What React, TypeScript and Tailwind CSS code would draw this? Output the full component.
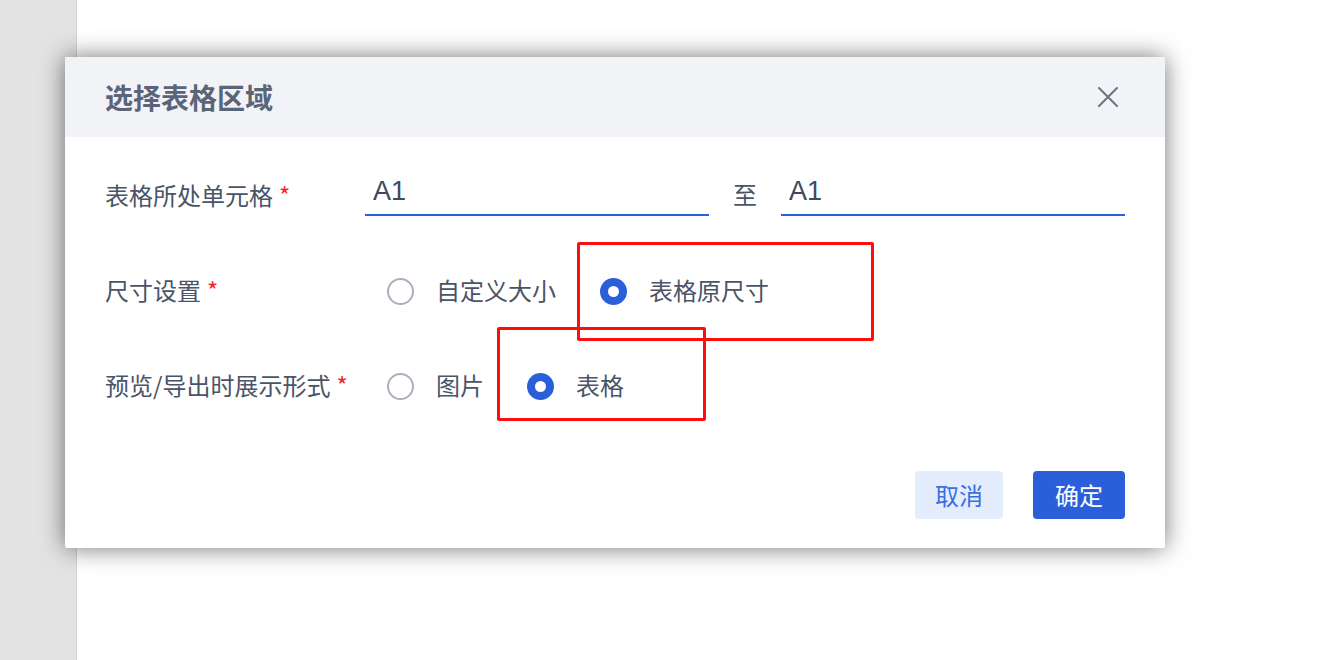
import React from "react";

const FONT = { fontFamily: '"Noto Sans CJK SC", "Noto Sans", sans-serif' };
const LATIN = { fontFamily: '"Liberation Sans", "Noto Sans CJK SC", sans-serif' };

function Radio({ checked, label }: { checked?: boolean; label: string }) {
  return (
    <div className="flex items-center">
      {checked ? (
        <span className="flex h-[27px] w-[27px] items-center justify-center rounded-full bg-[#2b5fd9]">
          <span className="h-[11px] w-[11px] rounded-full bg-white" />
        </span>
      ) : (
        <span className="h-[27px] w-[27px] rounded-full border-2 border-[#a9b0bc] bg-white" />
      )}
      <span className="mb-[3px] ml-[22px] text-[24px] leading-none text-[#4a5468]">{label}</span>
    </div>
  );
}

function Label({ text }: { text: string }) {
  return (
    <div className="mb-[3px] flex w-[260px] items-center text-[24px] leading-none text-[#4a5468]">
      <span>{text}</span>
      <span className="ml-[6px] text-[#f5222d]">*</span>
    </div>
  );
}

function Field() {
  return (
    <div className="flex h-[40px] w-[344px] items-start border-b-2 border-[#2b5fd9] pl-[8px] pt-[2px]">
      <span className="text-[27px] leading-none text-[#3d4a5e]" style={LATIN}>
        A1
      </span>
    </div>
  );
}

export default function App() {
  return (
    <div className="relative flex h-[660px] w-[1318px] overflow-hidden bg-white" style={FONT}>
      <div className="h-full w-[77px] border-r border-[#d2d2d2] bg-[#e3e3e3]" />
      <div className="flex-1 bg-white" />

      <div className="absolute left-[65px] top-[57px] w-[1100px] rounded-[2px] bg-white shadow-[0_0_24px_rgba(0,0,0,0.55)]">
        <div className="flex h-[80px] items-center justify-between bg-[#f2f3f7] pl-[40px] pr-[47px]">
          <span className="text-[28px] font-bold leading-none text-[#5a6579]">选择表格区域</span>
          <svg width="20" height="20" viewBox="0 0 20 20" className="text-[#6b7385]">
            <path d="M1 1 L19 19 M19 1 L1 19" stroke="currentColor" strokeWidth="2" strokeLinecap="round" />
          </svg>
        </div>

        <div className="flex flex-col gap-[35px] px-[40px] pt-[29px]">
          <div className="flex h-[60px] items-center">
            <Label text="表格所处单元格" />
            <div className="flex items-center">
              <Field />
              <span className="mx-[24px] mt-[-4px] text-[24px] leading-none text-[#4a5468]">至</span>
              <Field />
            </div>
          </div>
          <div className="flex h-[60px] items-center">
            <Label text="尺寸设置" />
            <div className="ml-[22px] flex items-center gap-[44px]">
              <Radio label="自定义大小" />
              <Radio checked label="表格原尺寸" />
            </div>
          </div>
          <div className="flex h-[60px] items-center">
            <Label text="预览/导出时展示形式" />
            <div className="ml-[22px] flex items-center gap-[43px]">
              <Radio label="图片" />
              <Radio checked label="表格" />
            </div>
          </div>
        </div>

        <div className="flex justify-end gap-[30px] px-[40px] pb-[29px] pt-[55px]">
          <button className="h-[48px] rounded-[4px] bg-[#e3edfd] px-[20px] text-[24px] leading-none text-[#3b6fe0]">
            取消
          </button>
          <button className="h-[48px] rounded-[4px] bg-[#2b5fd9] px-[22px] text-[24px] leading-none text-white">
            确定
          </button>
        </div>

        <div className="pointer-events-none absolute left-[512px] top-[185px] h-[99px] w-[297px] rounded-[2px] border-[3px] border-[#ff0d0d]" />
        <div className="pointer-events-none absolute left-[432px] top-[270px] h-[94px] w-[209px] rounded-[2px] border-[3px] border-[#ff0d0d]" />
      </div>
    </div>
  );
}
